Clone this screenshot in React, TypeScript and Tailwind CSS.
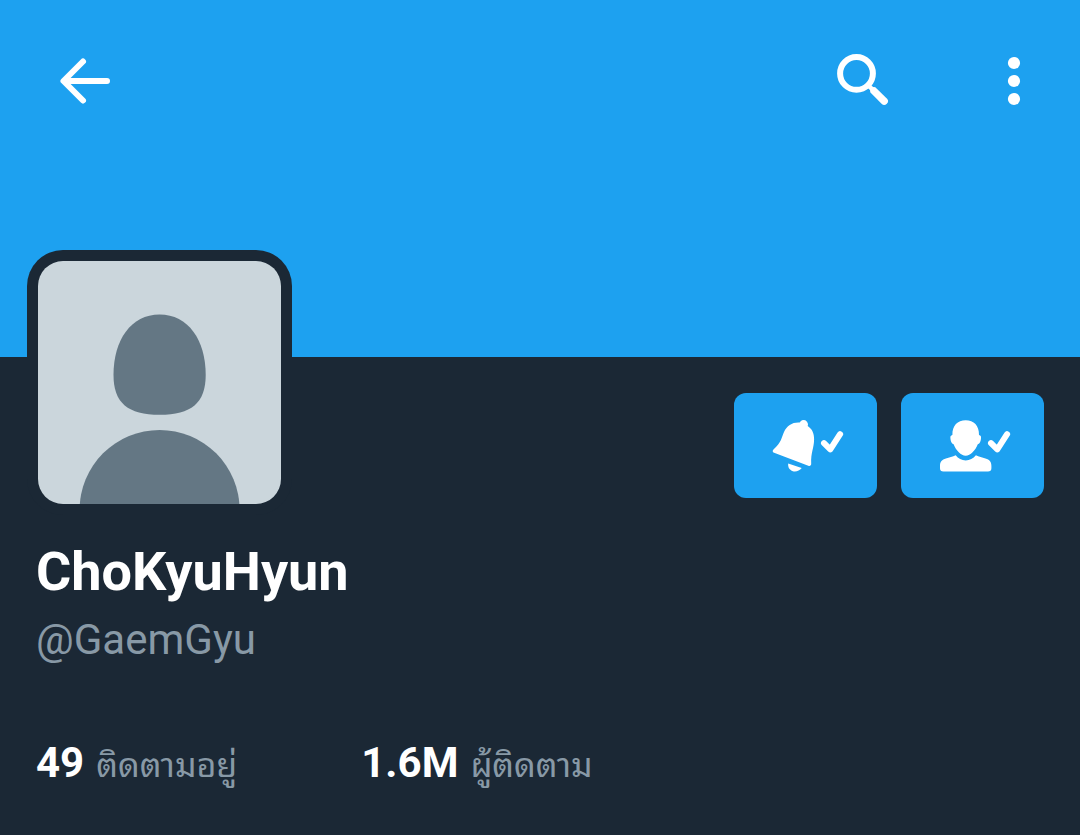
import React from 'react';

interface Stat {
  id: string;
  value: string;
  label: string;
}

const stats: Stat[] = [
  {id: 'following', value: '49', label: 'ติดตามอยู่'},
  {id: 'followers', value: '1.6M', label: 'ผู้ติดตาม'},
];

const BackIcon = () => (
  <svg className="h-[54px] w-[54px]" viewBox="0 0 54 54" fill="none">
    <path
      d="M25 7.5 5.5 27 25 46.5M6 27h43"
      stroke="currentColor"
      strokeWidth="6"
      strokeLinecap="round"
      strokeLinejoin="round"
    />
  </svg>
);

const SearchIcon = () => (
  <svg
    className="h-[54px] w-[54px]"
    viewBox="0 0 54 54"
    fill="none"
    stroke="currentColor"
  >
    <circle cx="19.5" cy="19.4" r="16.4" strokeWidth="6" />
    <path d="M31 31l6 6" strokeWidth="4.5" />
    <path d="M37 37l10.2 10.2" strokeWidth="7.4" strokeLinecap="round" />
  </svg>
);

const MoreIcon = () => (
  <svg className="h-[54px] w-[54px]" viewBox="0 0 54 54" fill="currentColor">
    <circle cx="27" cy="9" r="6.1" />
    <circle cx="27" cy="27" r="6.1" />
    <circle cx="27" cy="45" r="6.1" />
  </svg>
);

const Check = () => (
  <path
    d="M57 25.2l6.3 6.2 9.800-15.200"
    fill="none"
    stroke="currentColor"
    strokeWidth="6"
    strokeLinecap="round"
    strokeLinejoin="round"
  />
);

const BellIcon = () => (
  <svg className="h-[55px] w-[77px]" viewBox="0 0 77 55" fill="currentColor">
    <circle cx="36.6" cy="6.500" r="4.4" />
    <path d="M32.6 4.5C25.5 4 20 7.4 17 14c-2.400 5.500-2.600 10.500-10.300 17.200-1.500 1.300-1.300 3 .4 3.600l34.200 12.900c1.700.6 2.900-.2 2.900-1.900-.4-11.800 2.700-15 2.900-24.300C47.200 15.500 45.300 11 41 8.200z" />
    <path d="M21.200 45.500l13.500 4.500c-2.200 2.900-5.800 4.100-8.900 3.200-3.200-1-5-3.800-4.600-7.700z" />
    <Check />
  </svg>
);

const PersonIcon = () => (
  <svg className="h-[55px] w-[77px]" viewBox="0 0 77 55" fill="currentColor">
    <path d="M31.700 2.300C23.500 2.300 18.200 7.500 18.400 17c-1.700.3-2.200 1.500-2 3.200.2 2.600 1 5.300 3.200 6.100C22 32.500 27 37.800 31.700 37.800S41.400 32.500 43.800 26.300c2.200-.8 3-3.500 3.200-6.100.2-1.700-.3-2.900-2-3.200C45.200 7.500 39.900 2.300 31.700 2.300z" />
    <path d="M21.700 37.300c2.500 3.400 6 5.100 10 5.100s7.500-1.700 10.200-5.100c3 1.700 6.300 2.200 9.600 3.200 4 1.200 5.900 3.300 5.900 7.200v2.600c0 2.200-1.200 3.300-3.400 3.300H9.400C7.200 53.600 6 52.500 6 50.300v-2.600c0-3.900 2-6 5.900-7.200 3.300-1 6.800-1.500 9.800-3.200z" />
    <Check />
  </svg>
);

const Avatar = () => (
  <div className="-mt-[107px] rounded-[36px] bg-[#1b2835] p-[11px]">
    <svg
      className="h-[243px] w-[243px] rounded-[25px] bg-[#cbd6dc]"
      viewBox="0 0 243 243"
      fill="#647784"
      role="img"
      aria-label="ChoKyuHyun"
    >
      <path d="M121.600 53.500C93 53.500 75.500 79 75.500 114c0 28 14.500 39.800 46.100 39.800s46.100-11.800 46.100-39.800c0-35-17.500-60.500-46.100-60.500z" />
      <circle cx="121.600" cy="248.900" r="80" />
    </svg>
  </div>
);

const ActionButton = ({label, children}: any) => (
  <button
    aria-label={label}
    className="flex h-[105px] w-[143px] items-center justify-center rounded-xl bg-[#1da1f0]"
  >
    {children}
  </button>
);

export default function App() {
  return (
    <main className="min-h-screen bg-[#1b2835] font-['Roboto','Noto_Sans_Thai_Looped','Loma','Garuda','Waree',sans-serif] text-white">
      <header className="h-[357px] bg-[#1da1f0]">
        <nav className="flex items-center justify-between pt-[54px] pr-[39px] pl-[58px]">
          <button aria-label="Back">
            <BackIcon />
          </button>
          <div className="flex gap-24">
            <button aria-label="Search">
              <SearchIcon />
            </button>
            <button aria-label="More">
              <MoreIcon />
            </button>
          </div>
        </nav>
      </header>

      <section className="border-b border-[#17202c] pb-[47px]">
        <div className="flex items-start justify-between pr-9 pl-[27px]">
          <Avatar />
          <div className="mt-9 flex gap-6">
            <ActionButton label="Notifications">
              <BellIcon />
            </ActionButton>
            <ActionButton label="Following">
              <PersonIcon />
            </ActionButton>
          </div>
        </div>

        <div className="px-9">
          <h1 className="mt-[25px] text-[54px] leading-16 font-bold">
            ChoKyuHyun
          </h1>
          <p className="mt-3 text-[42px] leading-12 text-[#8899a6]">
            @GaemGyu
          </p>
          <div className="mt-[75px] flex gap-[124px]">
            {stats.map((stat) => (
              <a
                key={stat.id}
                href={`#${stat.id}`}
                className="flex items-baseline gap-3 leading-12"
              >
                <span className="text-[42px] font-bold">{stat.value}</span>
                <span className="text-[34px] text-[#8899a6]">{stat.label}</span>
              </a>
            ))}
          </div>
        </div>
      </section>
    </main>
  );
}
